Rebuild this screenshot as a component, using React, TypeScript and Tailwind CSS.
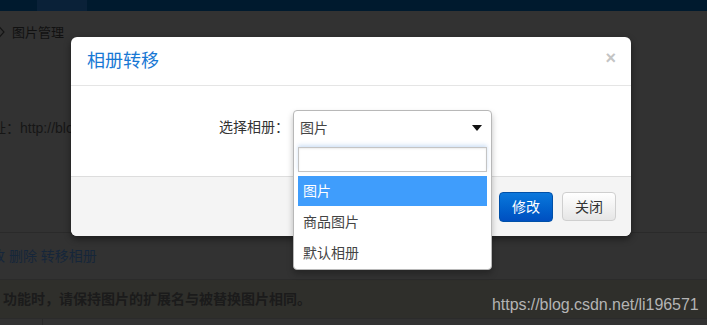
import React from "react";

const FONT = "font-['Liberation_Sans','Noto_Sans_CJK_SC',sans-serif]";

export default function App() {
  return (
    <div className={`relative w-[707px] h-[325px] overflow-hidden bg-[#323232] ${FONT}`}>
      {/* top nav bar */}
      <div className="flex h-[11px] bg-[#001a2e]">
        <div className="ml-[37px] w-[50px] bg-[#0a2138]" />
      </div>
      {/* breadcrumb */}
      <div className="flex h-[42px] items-center gap-[7px] text-[13px] leading-none text-[#111]">
        <svg width="6" height="12" viewBox="0 0 6 12" className="ml-[-1px]">
          <path d="M0.5 1 L5 6 L0.5 11" fill="none" stroke="#151515" strokeWidth="1.2" />
        </svg>
        <span>图片管理</span>
      </div>
      <div className="h-[65px]" />
      <div className="flex h-[20px] items-center overflow-hidden text-[14px] leading-none text-[#161616]">
        <span className="ml-[-8px] whitespace-nowrap">址：http://blog</span>
      </div>
      <div className="h-[94px]" />
      <div className="flex h-[47px] items-center border-t border-[#2a2a2a] text-[14px] leading-none text-[#16263a]">
        <span className="ml-[-9px] whitespace-nowrap">改 删除 转移相册</span>
      </div>
      <div className="flex h-[40px] items-center border-y border-[#2b2b2b] bg-[#2f2f2b] text-[14px] font-bold leading-none text-[#1b1b1b]">
        <span className="ml-[3px] whitespace-nowrap">功能时，请保持图片的扩展名与被替换图片相同。</span>
      </div>
      <div className="flex h-[10px]">
        <div className="w-[43px] border-r border-[#2a2a2a]" />
      </div>

      {/* watermark */}
      <div className="absolute left-[492px] top-[297px] text-[16px] leading-none tracking-[-0.05px] text-[#b4b4b4] font-['Liberation_Sans',sans-serif]">
        https://blog.csdn.net/li196571
      </div>

      {/* modal */}
      <div className="absolute left-[71px] top-[37px] w-[560px] rounded-[6px] bg-white shadow-[0_3px_7px_rgba(0,0,0,0.45)]">
        <div className="flex h-[49px] items-center justify-between border-b border-[#e5e5e5] pl-[16px] pr-[15px]">
          <span className="text-[18px] leading-none text-[#1878d4]">相册转移</span>
          <span className="mt-[-7px] text-[18px] font-bold leading-none text-[#c4c4c4] font-['Liberation_Sans',sans-serif]">×</span>
        </div>
        <div className="h-[90px]">
          <div className="ml-[148px] flex items-start pt-[24px]">
            <div className="flex h-[34px] w-[74px] items-center text-[14px] leading-none text-[#333]">选择相册：</div>
            <div className="relative z-10 h-[160px] w-[199px] rounded-[4px] border border-[#b8b8b8] bg-white shadow-[0_4px_6px_rgba(0,0,0,0.25)]">
              <div className="flex h-[33px] items-center justify-between pl-[6px] pr-[9px] text-[14px] leading-none text-[#444]">
                <span>图片</span>
                <svg width="10" height="6" viewBox="0 0 10 6">
                  <path d="M0 0 H10 L5 6 Z" fill="#111" />
                </svg>
              </div>
              <div className="mx-[4px] mt-[3px] h-[25px] border border-[#c4c4c4] bg-white shadow-[0_-2px_4px_rgba(120,170,230,0.35),inset_0_1px_2px_rgba(0,0,0,0.08)]" />
              <div className="mx-[4px] mt-[4px] flex flex-col text-[14px] leading-none">
                <div className="flex h-[30px] items-center bg-[#3f9dfc] pl-[5px] text-white">图片</div>
                <div className="flex h-[31px] items-center pl-[5px] text-[#444]">商品图片</div>
                <div className="flex h-[31px] items-center pl-[5px] text-[#444]">默认相册</div>
              </div>
            </div>
          </div>
        </div>
        <div className="flex h-[60px] items-center justify-end gap-[9px] rounded-b-[6px] border-t border-[#dddddd] bg-[#f4f4f4] pr-[15px]">
          <button className="flex h-[30px] w-[54px] items-center justify-center rounded-[4px] border border-[#0050a8] bg-gradient-to-b from-[#0c78dc] to-[#004fc0] text-[14px] leading-none text-white">
            修改
          </button>
          <button className="flex h-[29px] w-[54px] items-center justify-center rounded-[4px] border border-[#cfcfcf] bg-gradient-to-b from-white to-[#e6e6e6] text-[14px] leading-none text-[#333]">
            关闭
          </button>
        </div>
      </div>
    </div>
  );
}
